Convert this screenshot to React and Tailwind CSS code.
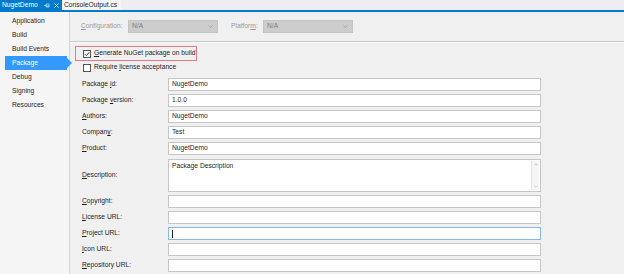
import { useState } from 'react';

const navItems = ['Application', 'Build', 'Build Events', 'Package', 'Debug', 'Signing', 'Resources'];

// label parts: [before, access key, after]
const fields = [
  { label: ['Package ', 'i', 'd:'], value: 'NugetDemo' },
  { label: ['Package ', 'v', 'ersion:'], value: '1.0.0' },
  { label: ['', 'A', 'uthors:'], value: 'NugetDemo' },
  { label: ['Compan', 'y', ':'], value: 'Test' },
  { label: ['', 'P', 'roduct:'], value: 'NugetDemo' },
  { label: ['', 'D', 'escription:'], value: 'Package Description', multi: true },
  { label: ['', 'C', 'opyright:'], value: '' },
  { label: ['', 'L', 'icense URL:'], value: '' },
  { label: ['', 'P', 'roject URL:'], value: '', focused: true },
  { label: ['', 'I', 'con URL:'], value: '' },
  { label: ['', 'R', 'epository URL:'], value: '' },
];

const Key = ({ parts }) => (
  <span className="whitespace-nowrap">
    {parts[0]}
    <span className="underline underline-offset-1">{parts[1]}</span>
    {parts[2]}
  </span>
);

const Check = ({ checked }) => (
  <span className="w-[8px] h-[8px] border border-[#555] bg-white flex items-center justify-center shrink-0">
    {checked && (
      <svg width="6" height="6" viewBox="0 0 6 6">
        <path d="M0.8 3.1 L2.4 4.7 L5.3 1.2" fill="none" stroke="#333" strokeWidth="1" />
      </svg>
    )}
  </span>
);

const Select = ({ value }) => (
  <div className="w-[90px] h-[13px] shrink-0 bg-[#cccccc] border border-[#c4c4c4] flex items-center justify-between pl-[3px] pr-[4px] text-[#808080]">
    <span>{value}</span>
    <svg width="5" height="3" viewBox="0 0 5 3">
      <path d="M0.5 0.5 L2.5 2.5 L4.5 0.5" fill="none" stroke="#a0a0a0" strokeWidth="0.8" />
    </svg>
  </div>
);

const App = () => {
  const [selected, setSelected] = useState('Package');

  return (
    <div
      className="w-[624px] h-[274px] overflow-hidden bg-[#f0f0f0] text-[6.7px] leading-none text-[#1e1e1e]"
      style={{ fontFamily: '"Liberation Sans", Arial, sans-serif' }}
    >
      {/* Document tabs */}
      <div className="h-[10px] flex bg-[#eeeef2]">
        <div className="w-[62px] bg-[#007acc] text-white flex items-center pl-[2px]">
          <span>NugetDemo</span>
          <svg className="ml-[6px]" width="6" height="5" viewBox="0 0 6 5">
            <path d="M0 2.5 H2 M2 1 V4 M2 1 H5 V4 H2 M2 3 H5" fill="none" stroke="#d6ecff" strokeWidth="0.7" />
          </svg>
          <svg className="ml-[4px]" width="5" height="5" viewBox="0 0 5 5">
            <path d="M0.5 0.5 L4.5 4.5 M4.5 0.5 L0.5 4.5" stroke="white" strokeWidth="0.9" />
          </svg>
        </div>
        <div className="flex items-center pl-[2px] pr-[4px] bg-[#f5f5f5]">ConsoleOutput.cs</div>
      </div>
      <div className="h-[2px] bg-[#007acc]" />

      <div className="flex h-[262px]">
        {/* Left nav */}
        <div className="w-[70px] shrink-0 border-r border-[#d4d4d4] bg-[#f5f5f5] pt-[2px] pl-[5px]">
          {navItems.map((item) => (
            <div
              key={item}
              onClick={() => setSelected(item)}
              className={`relative h-[14px] w-[62px] flex items-center pl-[7px] ${
                selected === item ? 'bg-[#3399ff] text-white' : ''
              }`}
            >
              {item}
              {selected === item && (
                <span className="absolute right-[-5px] top-[2px] w-0 h-0 border-y-[5px] border-y-transparent border-l-[5px] border-l-[#3399ff]" />
              )}
            </div>
          ))}
        </div>

        {/* Content */}
        <div className="flex-1">
          <div className="h-[30px] flex items-center pl-[11px] pb-[1px] border-b border-[#c8c8c8] shadow-[0_1px_0_#fbfbfb]">
            <span className="text-[#9a9a9a] w-[47px] shrink-0">
              <Key parts={['', 'C', 'onfiguration:']} />
            </span>
            <Select value="N/A" />
            <span className="text-[#9a9a9a] ml-[13px] w-[32px] shrink-0">
              <Key parts={['Platfor', 'm', ':']} />
            </span>
            <Select value="N/A" />
          </div>

          <div className="pl-[5px] pt-[4px]">
            <div className="w-[122px] h-[15px] border border-[#e07b87] flex items-center gap-[3px] pl-[7px]">
              <Check checked />
              <Key parts={['', 'G', 'enerate NuGet package on build']} />
            </div>
            <div className="h-[13px] flex items-center gap-[3px] pl-[8px]">
              <Check />
              <Key parts={['Require ', 'l', 'icense acceptance']} />
            </div>

            <div className="mt-[4px] flex flex-col gap-[3px]">
              {fields.map((f, i) => (
                <div key={i} className={`flex items-center ${f.multi ? 'mt-[1px]' : ''}`}>
                  <span className="w-[93px] pl-[7px]">
                    <Key parts={f.label} />
                  </span>
                  {f.multi ? (
                    <div className="w-[373px] h-[33px] bg-white border border-[#c6c6c6] flex">
                      <div className="flex-1 pl-[3px] pt-[3px]">{f.value}</div>
                      <div className="w-[8px] my-[1px] mr-[1px] bg-[#f6f6f6] border-l border-[#e6e6e6] flex flex-col justify-between items-center py-[2px]">
                        <svg width="4" height="3" viewBox="0 0 4 3">
                          <path d="M0.3 2.5 L2 0.7 L3.7 2.5" fill="none" stroke="#b0b0b0" strokeWidth="0.7" />
                        </svg>
                        <svg width="4" height="3" viewBox="0 0 4 3">
                          <path d="M0.3 0.5 L2 2.3 L3.7 0.5" fill="none" stroke="#b0b0b0" strokeWidth="0.7" />
                        </svg>
                      </div>
                    </div>
                  ) : (
                    <div
                      className={`w-[373px] h-[13px] bg-white border flex items-center pl-[3px] ${
                        f.focused ? 'border-[#86b8e0]' : 'border-[#c6c6c6]'
                      }`}
                    >
                      {f.focused ? <span className="w-[1px] h-[8px] bg-[#222]" /> : f.value}
                    </div>
                  )}
                </div>
              ))}
            </div>
          </div>
        </div>
      </div>
    </div>
  );
};

export default App;
